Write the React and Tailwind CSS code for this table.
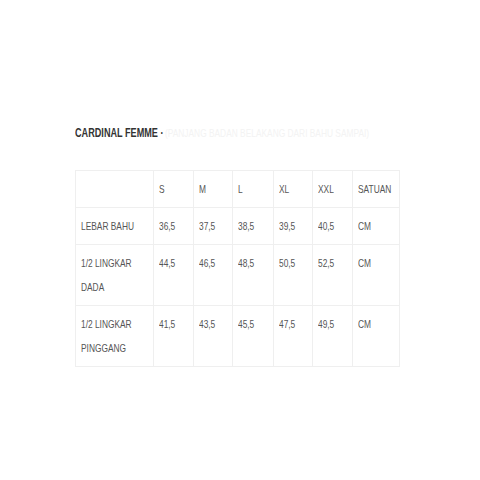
import React from "react";

const headers = ["", "S", "M", "L", "XL", "XXL", "SATUAN"];

const rows = [
  { label: ["LEBAR BAHU"], values: ["36,5", "37,5", "38,5", "39,5", "40,5", "CM"] },
  { label: ["1/2 LINGKAR", "DADA"], values: ["44,5", "46,5", "48,5", "50,5", "52,5", "CM"] },
  { label: ["1/2 LINGKAR", "PINGGANG"], values: ["41,5", "43,5", "45,5", "47,5", "49,5", "CM"] },
];

const colWidths = ["w-[78px]", "w-[40px]", "w-[39px]", "w-[41px]", "w-[39px]", "w-[40px]", "w-[47px]"];

// the source text is a condensed face; squeeze Liberation Sans to match
const Narrow = ({ children }) => (
  <span className="inline-block origin-left scale-x-[0.76] whitespace-nowrap">{children}</span>
);

export default function App() {
  return (
    <div
      className="w-[480px] h-[480px] bg-white text-[#555]"
      style={{ fontFamily: '"Liberation Sans", Arial, sans-serif' }}
    >
      <div className="pt-[126px] pl-[75px]">
        <div className="flex items-center h-[14px] whitespace-nowrap">
          <span className="inline-block origin-left scale-x-[0.76] text-[12px] font-bold text-[#333]">
            CARDINAL FEMME ·
          </span>
          <span className="-ml-[26px] inline-block origin-left scale-x-[0.76] text-[11px] text-[#f3f3f3]">
            (PANJANG BADAN BELAKANG DARI BAHU SAMPAI)
          </span>
        </div>

        <table className="mt-[30px] border-collapse text-[11px] table-fixed w-[324px]">
          <colgroup>
            {colWidths.map((w, i) => (
              <col key={i} className={w} />
            ))}
          </colgroup>
          <thead>
            <tr>
              {headers.map((h, i) => (
                <td
                  key={i}
                  className="border border-[#efefef] pl-[5px] pt-[6px] pb-[6px] leading-[24px] align-top"
                >
                  <Narrow>{h}</Narrow>
                </td>
              ))}
            </tr>
          </thead>
          <tbody>
            {rows.map((r, ri) => (
              <tr key={ri}>
                <td className="border border-[#efefef] pl-[5px] pt-[6px] pb-[6px] leading-[24px] align-top">
                  {r.label.map((l, li) => (
                    <div key={li}>
                      <Narrow>{l}</Narrow>
                    </div>
                  ))}
                </td>
                {r.values.map((v, vi) => (
                  <td
                    key={vi}
                    className="border border-[#efefef] pl-[5px] pt-[6px] pb-[6px] leading-[24px] align-top"
                  >
                    <Narrow>{v}</Narrow>
                  </td>
                ))}
              </tr>
            ))}
          </tbody>
        </table>
      </div>
    </div>
  );
}
